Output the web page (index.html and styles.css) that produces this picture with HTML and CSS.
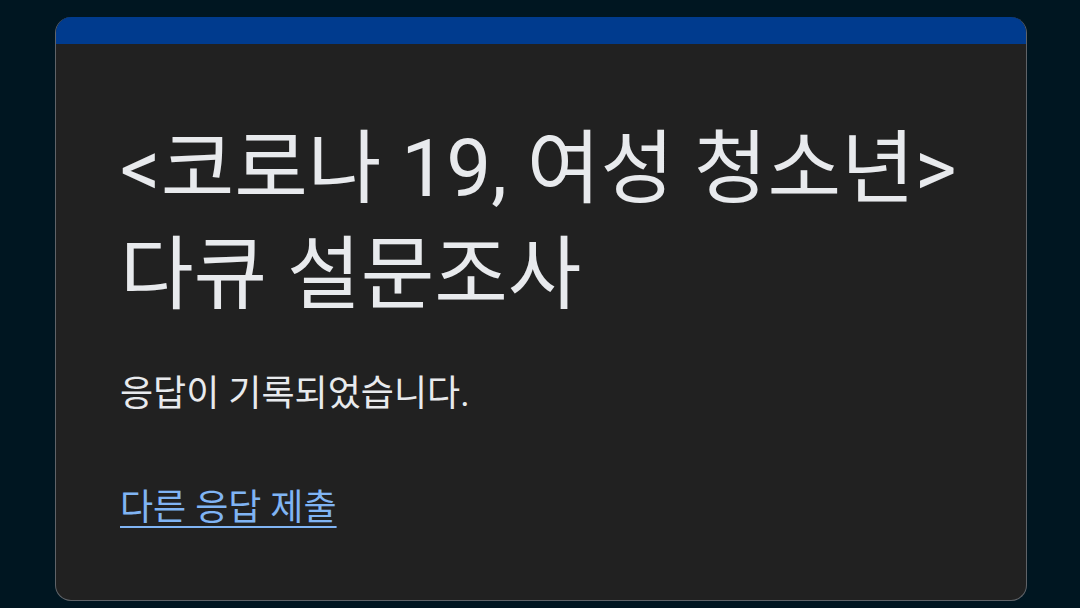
FILE: index.html
```html
<!DOCTYPE html>
<html lang="ko">
<head>
<meta charset="utf-8">
<link rel="stylesheet" href="styles.css">
</head>
<body>
<div class="page">
  <div class="card">
    <div class="band"></div>
    <div class="content">
      <h1 class="title">&lt;코로나 19, 여성 청소년&gt;<br>다큐 설문조사</h1>
      <p class="msg">응답이 기록되었습니다.</p>
      <a class="link" href="#">다른 응답 제출</a>
    </div>
  </div>
</div>
</body>
</html>
```
FILE: styles.css
```css
html, body {
  margin: 0;
  padding: 0;
  background: #001621;
}
body {
  font-family: Roboto, "Noto Sans CJK KR", sans-serif;
  color: #e8eaed;
}
.page {
  padding: 17px 53px 0 55px;
  height: 608px;
  box-sizing: border-box;
  overflow: hidden;
}
.card {
  background: #212121;
  border-radius: 16px;
  border: 1.5px solid #5f6368;
  border-top: none;
  overflow: hidden;
  height: 584px;
  box-sizing: border-box;
}
.band {
  height: 27px;
  background: #003b8e;
  margin: 0 -1.5px;
}
.content {
  padding: 72px 66px 0 64px;
}
.title {
  margin: 0;
  font-weight: 400;
  font-size: 80px;
  line-height: 106px;
  letter-spacing: 0;
}
.msg {
  margin: 42px 0 0 0;
  font-size: 36px;
  line-height: 48px;
}
.link {
  display: inline-block;
  margin-top: 66px;
  font-size: 36px;
  line-height: 48px;
  color: #80b4f4;
  text-decoration: underline;
  text-underline-offset: 6px;
  text-decoration-thickness: 2px;
}
```
